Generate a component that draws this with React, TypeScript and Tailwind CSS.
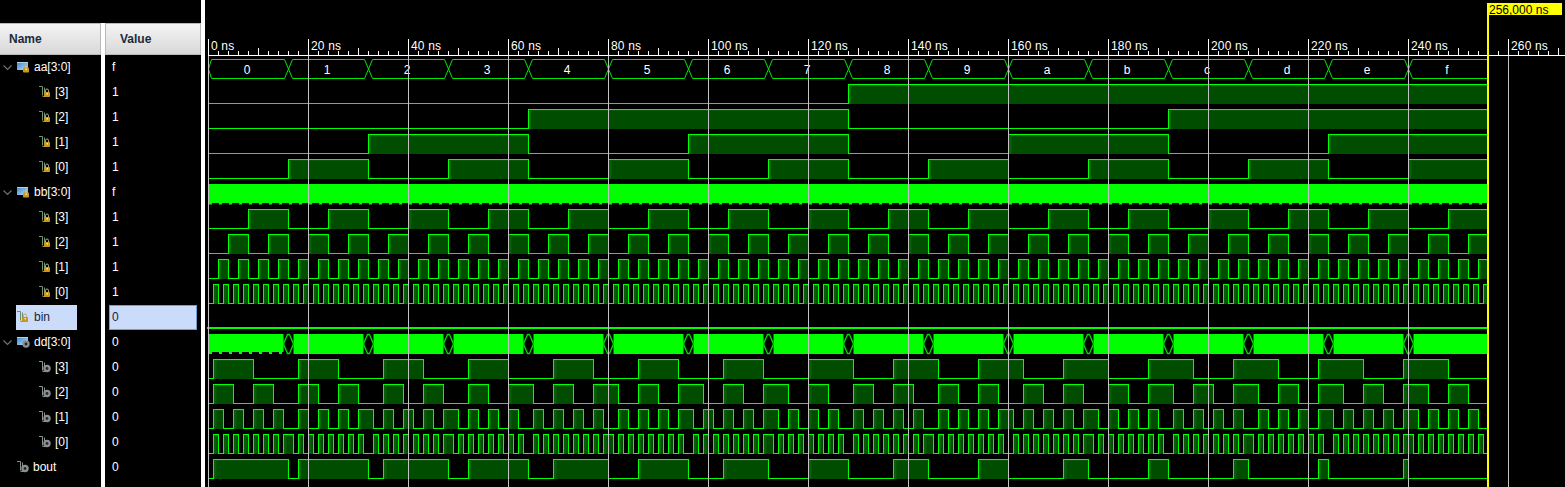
import React from "react";

const X0 = 208.5;
const PX = 5;
const END = 256;
const x = (t: number) => X0 + t * PX;

const aa = (t: number) => Math.floor(t / 16) & 15;
const bb = (t: number) => t % 16;
const dd = (t: number) => (aa(t) - bb(t)) & 15;
const bout = (t: number) => (bb(t) > aa(t) ? 1 : 0);

type Row = {
  name: string;
  value: string;
  depth: 0 | 1;
  kind: "in" | "out";
  bus?: boolean;
  selected?: boolean;
};

const bits = (kind: "in" | "out", value: string): Row[] =>
  [3, 2, 1, 0].map((n) => ({ name: `[${n}]`, value, depth: 1 as const, kind }));

const rows: Row[] = [
  { name: "aa[3:0]", value: "f", depth: 0, kind: "in", bus: true },
  ...bits("in", "1"),
  { name: "bb[3:0]", value: "f", depth: 0, kind: "in", bus: true },
  ...bits("in", "1"),
  { name: "bin", value: "0", depth: 0, kind: "in", selected: true },
  { name: "dd[3:0]", value: "0", depth: 0, kind: "out", bus: true },
  ...bits("out", "0"),
  { name: "bout", value: "0", depth: 0, kind: "out" },
];

const Chevron = () => (
  <svg width="9" height="6" viewBox="0 0 9 6" className="ml-[3px] mr-[5px] shrink-0">
    <path d="M0.5 0.5 L4.5 4.5 L8.5 0.5" fill="none" stroke="#6f7378" strokeWidth="1.1" />
  </svg>
);

const Badge = ({ kind, cx, cy }: { kind: "in" | "out"; cx: number; cy: number }) =>
  kind === "in" ? (
    <g>
      <path d={`M${cx - 1.5} ${cy - 1} v-1.5 a1.5 1.5 0 0 1 3 0 v1.5`} fill="none" stroke="#b0aa98" />
      <rect x={cx - 3} y={cy - 1} width="6" height="5" rx="0.8" fill="#c9971a" />
      <rect x={cx - 0.5} y={cy} width="1.5" height="1.5" fill="#f6e6a0" />
    </g>
  ) : (
    <g>
      <circle cx={cx} cy={cy + 0.5} r="3.7" fill="#8b8e92" />
      <circle cx={cx} cy={cy + 0.5} r="1.4" fill="#26282a" />
    </g>
  );

const BusIcon = ({ kind }: { kind: "in" | "out" }) => (
  <svg width="13" height="13" viewBox="0 0 13 13" className="shrink-0">
    <defs>
      <linearGradient id="busfill" x1="0" y1="0" x2="1" y2="1">
        <stop offset="0" stopColor="#3f86cc" />
        <stop offset="0.55" stopColor="#7db8e8" />
        <stop offset="1" stopColor="#e6eff6" />
      </linearGradient>
    </defs>
    <rect x="0" y="2" width="11" height="8" fill="url(#busfill)" />
    <rect x="0" y="2" width="11" height="1" fill="#a8d4f2" />
    <Badge kind={kind} cx={9} cy={8.5} />
  </svg>
);

const LeafIcon = ({ kind, dark }: { kind: "in" | "out"; dark?: boolean }) => (
  <svg width="12" height="13" viewBox="0 0 12 13" className="shrink-0">
    <path
      d="M0 1.5 H3.5 V10.5 M5.5 11 V2.5"
      fill="none"
      stroke={dark ? "#6d8a6d" : kind === "in" ? "#6f946f" : "#8a968a"}
      strokeWidth="1"
    />
    <path d="M3.5 11.5 H9" fill="none" stroke="#85908a" strokeWidth="1" />
    <Badge kind={kind} cx={8} cy={8} />
  </svg>
);

const NameRow = ({ row }: { row: Row }) => {
  if (row.depth === 1) {
    return (
      <div className="flex h-[25px] items-center pb-[2px] pl-[39px] text-white">
        <LeafIcon kind={row.kind} />
        <span className="ml-[4px]">{row.name}</span>
      </div>
    );
  }
  return (
    <div className="flex h-[25px] items-center text-white">
      {row.bus ? <Chevron /> : <div className="w-[17px] shrink-0" />}
      {row.selected ? (
        <div className="-ml-px flex h-[25px] w-[61px] items-center bg-[#cbdcfb] pb-[2px] pl-px text-[#1a2436]">
          <LeafIcon kind={row.kind} dark />
          <span className="ml-[5px]">{row.name}</span>
        </div>
      ) : (
        <div className="flex h-[25px] items-center pb-[2px]">
          {row.bus ? <BusIcon kind={row.kind} /> : <LeafIcon kind={row.kind} />}
          <span className="ml-[4px]">{row.name}</span>
        </div>
      )}
    </div>
  );
};

const ValueRow = ({ row }: { row: Row }) =>
  row.selected ? (
    <div className="mx-1 flex h-[25px] items-center border border-[#6f9fd0] bg-[#cbdcfb] pb-[2px] pl-[2px] text-[#1a2436]">
      {row.value}
    </div>
  ) : (
    <div className="flex h-[25px] items-center pb-[2px] pl-[7px] text-white">{row.value}</div>
  );

// one digital trace, row index counted from the top of the list
const Trace = ({ i, fn }: { i: number; fn: (t: number) => number }) => {
  const low = 78.5 + 25 * i;
  const high = 59.5 + 25 * i;
  const y = (v: number) => (v ? high : low);
  let d = `M${x(0)} ${y(fn(0))}`;
  const pulses: [number, number][] = [];
  let start = fn(0) ? 0 : -1;
  for (let t = 1; t <= END; t++) {
    const prev = fn(t - 1);
    const cur = t === END ? prev : fn(t);
    if (cur !== prev) {
      d += ` H${x(t)} V${y(cur)}`;
      if (cur) start = t;
      else {
        pulses.push([start, t]);
        start = -1;
      }
    }
  }
  d += ` H${x(END)}`;
  if (start >= 0) pulses.push([start, END]);
  return (
    <g>
      {pulses.map(([a, b]) => (
        <g key={a}>
          <rect x={x(a)} y={high} width={x(b) - x(a)} height={low - high + 0.5} fill="#004d00" />
          <rect x={x(a) + 0.5} y={high} width="2.5" height={low - high + 0.5} fill="#085f08" />
          <rect x={x(a)} y={high + 0.5} width={x(b) - x(a)} height="1" fill="#085a08" />
        </g>
      ))}
      <path d={d} fill="none" stroke="#00ff00" strokeWidth="1" shapeRendering="crispEdges" />
    </g>
  );
};

const AaBus = () => {
  const top = 59.5;
  const bot = 78.5;
  const mid = 69;
  const cells = Array.from({ length: 16 }, (_, k) => k);
  return (
    <g>
      {cells.map((k) => {
        const a = x(k * 16);
        const b = x((k + 1) * 16);
        const l = k === 0 ? 3 : 4;
        const r = k === 15 ? 1 : 4;
        return (
          <g key={k}>
            <path
              d={`M${a} ${mid} L${a + l} ${top} H${b - r} L${b} ${mid} L${b - r} ${bot} H${a + l} Z`}
              fill="none"
              stroke="#00e800"
              strokeWidth="1"
            />
            <text x={a + 38.5} y={74} fill="#fff" fontSize="12" textAnchor="middle">
              {k.toString(16)}
            </text>
          </g>
        );
      })}
    </g>
  );
};

const Teeth = ({ y, h, from, to }: { y: number; h: number; from: number; to: number }) => (
  <g>
    {Array.from({ length: Math.ceil((to - from) / 2) }, (_, k) => (
      <rect key={k} x={x(from + k * 2) + 0.5} y={y} width="3" height={h} fill="#00ff00" />
    ))}
  </g>
);

const DdBus = () => {
  const top = 334;
  const bot = 354;
  const mid = 344;
  const parts = Array.from({ length: 16 }, (_, k) => k);
  return (
    <g>
      {parts.map((k) => {
        const a = k === 0 ? x(0) : x(k * 16 + 1);
        const b = k === 15 ? x(END) : x((k + 1) * 16 - 1);
        return (
          <rect
            key={k}
            x={a}
            y={top}
            width={b - a}
            height={k === 0 ? bot - top - 2 : bot - top}
            fill="#00ff00"
          />
        );
      })}
      <Teeth y={352} h={2} from={0} to={15} />
      {parts.slice(1).map((k) => {
        const c = x(k * 16);
        return (
          <path
            key={k}
            d={`M${c - 5} ${mid} L${c - 1} ${top + 0.5} H${c + 1} L${c + 5} ${mid} L${c + 1} ${bot - 0.5} H${c - 1} Z`}
            fill="none"
            stroke="#00d800"
            strokeWidth="1.4"
          />
        );
      })}
    </g>
  );
};

const TimeAxis = () => (
  <g>
    <rect x="208" y="55" width="1357" height="1" fill="#ffffff" />
    {Array.from({ length: 136 }, (_, k) => {
      const px = 208 + k * 10;
      const h = k % 10 === 0 ? 16 : k % 5 === 0 ? 7 : 4;
      return <rect key={k} x={px} y={55 - h} width="1" height={h} fill="#ffffff" />;
    })}
    {Array.from({ length: 14 }, (_, k) => (
      <text key={k} x={211 + k * 100} y={49.5} fill="#ffffff" fontSize="12" letterSpacing="0.15">
        {k * 20} ns
      </text>
    ))}
  </g>
);

const Waves = () => (
  <svg width="1360" height="487" viewBox="205 0 1360 487" className="block">
    <TimeAxis />
    <AaBus />
    <Trace i={1} fn={(t) => (aa(t) >> 3) & 1} />
    <Trace i={2} fn={(t) => (aa(t) >> 2) & 1} />
    <Trace i={3} fn={(t) => (aa(t) >> 1) & 1} />
    <Trace i={4} fn={(t) => aa(t) & 1} />

    <rect x={x(0)} y="184" width={x(END) - x(0)} height="19" fill="#00ff00" />
    <Teeth y={203} h={1.5} from={0} to={END} />
    <Trace i={6} fn={(t) => (bb(t) >> 3) & 1} />
    <Trace i={7} fn={(t) => (bb(t) >> 2) & 1} />
    <Trace i={8} fn={(t) => (bb(t) >> 1) & 1} />
    <Trace i={9} fn={(t) => bb(t) & 1} />

    <rect x="207" y="327" width="1281" height="2" fill="#00ff00" />

    <DdBus />
    <Trace i={12} fn={(t) => (dd(t) >> 3) & 1} />
    <Trace i={13} fn={(t) => (dd(t) >> 2) & 1} />
    <Trace i={14} fn={(t) => (dd(t) >> 1) & 1} />
    <Trace i={15} fn={(t) => dd(t) & 1} />
    <Trace i={16} fn={bout} />

    {Array.from({ length: 14 }, (_, k) => (
      <rect key={k} x={208 + k * 100} y="56" width="1" height="431" fill="#c4c4c4" />
    ))}

    <rect x="1487" y="3" width="2" height="484" fill="#ffff00" />
    <rect x="1487" y="3" width="75" height="12" fill="#ffff00" />
    <text x="1489" y="13.5" fill="#000000" fontSize="12">
      256,000 ns
    </text>
  </svg>
);

export default function App() {
  return (
    <div className="flex h-[487px] w-[1565px] overflow-hidden bg-black font-['Liberation_Sans',Arial,sans-serif] text-xs">
      <div className="w-[101px] shrink-0 pt-[23px]">
        <div className="flex h-8 items-center border-y border-r border-[#b8b8b8] bg-gradient-to-b from-[#f4f4f4] to-[#d8d8d8] pl-[9px] font-bold text-[#1a2a3c]">
          Name
        </div>
        {rows.map((row) => (
          <NameRow key={row.name + row.kind + row.value} row={row} />
        ))}
      </div>
      <div className="flex w-[4px] shrink-0 flex-col">
        <div className="h-[23px] bg-black" />
        <div className="flex-1 bg-white" />
      </div>
      <div className="w-[96px] shrink-0 pt-[23px]">
        <div className="flex h-8 items-center border border-[#b8b8b8] bg-gradient-to-b from-[#f4f4f4] to-[#d8d8d8] pl-[14px] font-bold text-[#1a2a3c]">
          Value
        </div>
        {rows.map((row, i) => (
          <ValueRow key={i} row={row} />
        ))}
      </div>
      <div className="w-[4px] shrink-0 bg-white" />
      <Waves />
    </div>
  );
}
